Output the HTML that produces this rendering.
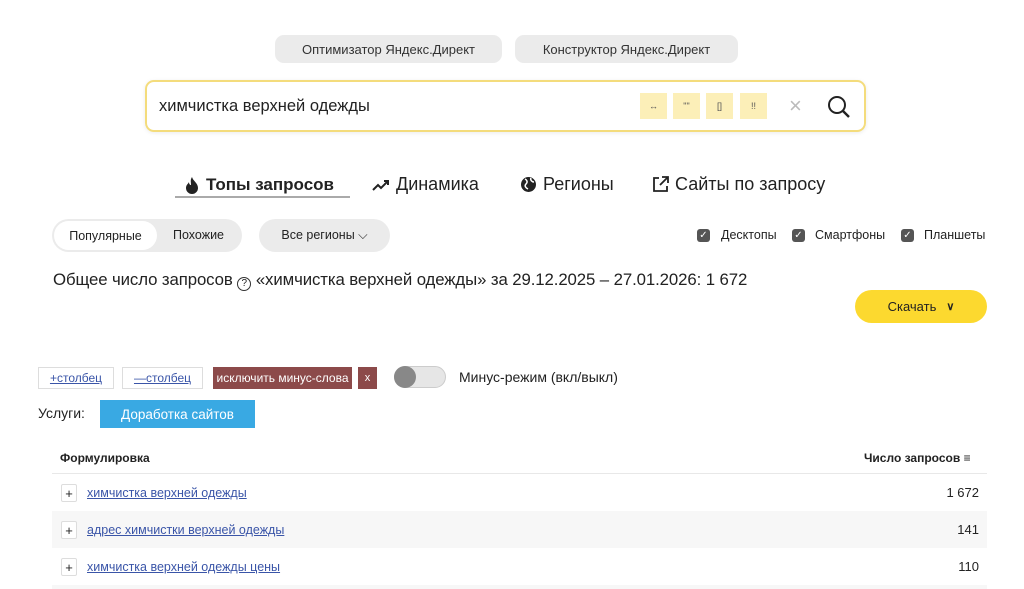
<!DOCTYPE html>
<html><head><meta charset="utf-8"><style>
*{box-sizing:border-box;margin:0;padding:0}
body{width:1024px;height:589px;background:#fff;font-family:"Liberation Sans",sans-serif;color:#222;position:relative;overflow:hidden}
.a{position:absolute;white-space:nowrap}
.pill{background:#ebebeb;border-radius:9px;font-size:13px;color:#333;display:flex;align-items:center;justify-content:center;height:28px;top:35px}
.sb{left:145px;top:80px;width:721px;height:52px;border:2px solid #f4dc7c;border-radius:9px;box-shadow:0 1px 4px rgba(0,0,0,0.08)}
.yb{top:93px;width:27px;height:26px;background:#fcefb8;font-size:9px;display:flex;align-items:center;justify-content:center;color:#555}
.tab{top:174px;font-size:18px;color:#222;display:flex;align-items:center;gap:6px}
.cb{width:13px;height:13px;background:#555;border-radius:3px;color:#fff;font-size:10px;display:flex;align-items:center;justify-content:center}
.lnk{color:#3a55a8;text-decoration:underline;font-size:12.5px}
.row{left:52px;width:935px;height:37px}
.plus{position:absolute;left:9px;top:10px;width:16px;height:18px;border:1px solid #ddd;border-radius:2px;font-size:13px;display:flex;align-items:center;justify-content:center;background:#fff}
</style></head><body>
<div class="a pill" style="left:275px;width:227px">Оптимизатор Яндекс.Директ</div>
<div class="a pill" style="left:515px;width:223px">Конструктор Яндекс.Директ</div>
<div class="a sb"></div>
<div class="a" style="left:159px;top:97px;font-size:16.5px">химчистка верхней одежды</div>
<div class="a yb" style="left:640px">↔</div>
<div class="a yb" style="left:673px">""</div>
<div class="a yb" style="left:706px">[]</div>
<div class="a yb" style="left:740px">!!</div>
<div class="a" style="left:789px;top:93px;font-size:22px;color:#bbb">×</div>
<svg class="a" style="left:826px;top:94px" width="26" height="26" viewBox="0 0 26 26"><circle cx="11" cy="11" r="8" fill="none" stroke="#222" stroke-width="2"/><path d="M17 17l6 6" stroke="#222" stroke-width="2.4"/></svg>

<div class="a tab" style="left:184px;font-weight:bold;font-size:17px;top:175px"><svg width="16" height="18" viewBox="0 0 16 18"><path d="M8 1C9 5 14 7 14 12a6 6 0 0 1-12 0c0-3 2-4 3-6 0 2 1 3 2 3C7 6 6 4 8 1z" fill="#222"/></svg>Топы запросов</div>
<div class="a" style="left:175px;top:196px;width:175px;height:2px;background:#aaa"></div>
<div class="a tab" style="left:372px"><svg width="18" height="14" viewBox="0 0 18 14"><path d="M1 12l5-5 3 3 7-7M12 3h4v4" fill="none" stroke="#222" stroke-width="2"/></svg>Динамика</div>
<div class="a tab" style="left:520px"><svg width="17" height="17" viewBox="0 0 17 17"><circle cx="8.5" cy="8.5" r="7.5" fill="#222"/><path d="M5 3c2 1 3 3 1 5s0 4 2 5M11 2c-1 2 1 4 3 4" fill="none" stroke="#fff" stroke-width="1.5"/></svg>Регионы</div>
<div class="a tab" style="left:652px"><svg width="17" height="17" viewBox="0 0 17 17"><path d="M7 2H2v13h13v-5M10 1h6v6M16 1L8 9" fill="none" stroke="#222" stroke-width="1.8"/></svg>Сайты по запросу</div>

<div class="a" style="left:52px;top:219px;width:190px;height:33px;background:#ebebeb;border-radius:17px"></div>
<div class="a" style="left:54px;top:221px;width:103px;height:29px;background:#fff;border-radius:15px;font-size:12.5px;display:flex;align-items:center;justify-content:center">Популярные</div>
<div class="a" style="left:173px;top:228px;font-size:12.5px">Похожие</div>
<div class="a" style="left:259px;top:219px;width:131px;height:33px;background:#ebebeb;border-radius:17px;font-size:12.5px;display:flex;align-items:center;justify-content:center">Все регионы ⌵</div>

<div class="a cb" style="left:697px;top:229px">✓</div><div class="a" style="left:721px;top:228px;font-size:12.5px">Десктопы</div>
<div class="a cb" style="left:792px;top:229px">✓</div><div class="a" style="left:815px;top:228px;font-size:12.5px">Смартфоны</div>
<div class="a cb" style="left:901px;top:229px">✓</div><div class="a" style="left:924px;top:228px;font-size:12.5px">Планшеты</div>

<div class="a" style="left:53px;top:270px;font-size:16.8px;letter-spacing:-0.1px">Общее число запросов <span style="display:inline-block;width:14px;height:14px;border:1.5px solid #333;border-radius:50%;font-size:10px;text-align:center;line-height:11px;vertical-align:-1px">?</span> «химчистка верхней одежды» за 29.12.2025 – 27.01.2026: 1 672</div>
<div class="a" style="left:855px;top:290px;width:132px;height:33px;background:#fcd92f;border-radius:17px;font-size:13px;display:flex;align-items:center;justify-content:center;gap:10px">Скачать <b style="font-size:11px">∨</b></div>

<div class="a" style="left:38px;top:367px;width:76px;height:22px;border:1px solid #ddd;display:flex;align-items:center;justify-content:center"><span class="lnk" style="font-size:12px">+столбец</span></div>
<div class="a" style="left:122px;top:367px;width:81px;height:22px;border:1px solid #ddd;display:flex;align-items:center;justify-content:center"><span class="lnk" style="font-size:12px">—столбец</span></div>
<div class="a" style="left:213px;top:367px;width:139px;height:22px;background:#8c4a4a;color:#fff;font-size:12px;display:flex;align-items:center;justify-content:center">исключить минус-слова</div>
<div class="a" style="left:358px;top:367px;width:19px;height:22px;background:#8c4a4a;color:#fff;font-size:11px;display:flex;align-items:center;justify-content:center">x</div>
<div class="a" style="left:394px;top:366px;width:52px;height:22px;border-radius:11px;background:#e6e6e6;border:1px solid #ccc"></div>
<div class="a" style="left:394px;top:366px;width:22px;height:22px;border-radius:11px;background:#888"></div>
<div class="a" style="left:459px;top:369px;font-size:14px">Минус-режим (вкл/выкл)</div>

<div class="a" style="left:38px;top:405px;font-size:14px">Услуги:</div>
<div class="a" style="left:100px;top:400px;width:155px;height:28px;background:#39a9e3;color:#fff;font-size:13.5px;display:flex;align-items:center;justify-content:center">Доработка сайтов</div>

<div class="a" style="left:60px;top:451px;font-size:12px;font-weight:bold">Формулировка</div>
<div class="a" style="left:864px;top:451px;font-size:12px;font-weight:bold">Число запросов <span style="font-weight:normal">≡</span></div>
<div class="a" style="left:52px;top:473px;width:935px;height:1px;background:#e8e8e8"></div>
<div class="a row" style="top:474px"><div class="plus">+</div><span class="a lnk" style="left:35px;top:12px">химчистка верхней одежды</span><span class="a" style="right:8px;top:11px;font-size:13px">1 672</span></div>
<div class="a row" style="top:511px;background:#f7f7f7"><div class="plus">+</div><span class="a lnk" style="left:35px;top:12px">адрес химчистки верхней одежды</span><span class="a" style="right:8px;top:11px;font-size:13px">141</span></div>
<div class="a row" style="top:548px"><div class="plus">+</div><span class="a lnk" style="left:35px;top:12px">химчистка верхней одежды цены</span><span class="a" style="right:8px;top:11px;font-size:13px">110</span></div>
<div class="a" style="left:52px;top:585px;width:935px;height:4px;background:#f7f7f7"></div>
</body></html>
